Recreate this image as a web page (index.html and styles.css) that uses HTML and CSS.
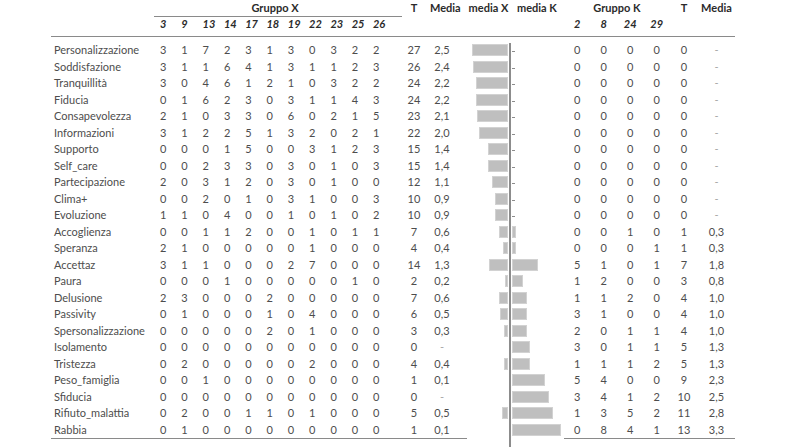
FILE: index.html
```html
<!DOCTYPE html>
<html lang="it">
<head>
<meta charset="utf-8">
<title>Gruppo X / Gruppo K</title>
<link rel="stylesheet" href="styles.css">
</head>
<body>
<div class="sheet">
  <div class="row h1"><span></span><span class="gx">Gruppo X</span><span>T</span><span>Media</span><span></span><span>media X</span><span>media K</span><span class="gk">Gruppo K</span><span>T</span><span>Media</span></div>
  <div class="row h2"><span></span><span>3</span><span>9</span><span>13</span><span>14</span><span>17</span><span>18</span><span>19</span><span>22</span><span>23</span><span>25</span><span>26</span><span></span><span></span><span></span><span></span><span></span><span></span><span>2</span><span>8</span><span>24</span><span>29</span><span></span><span></span></div>
  <div class="body">
    <div class="row"><span class="lbl">Personalizzazione</span><span>3</span><span>1</span><span>7</span><span>2</span><span>3</span><span>1</span><span>3</span><span>0</span><span>3</span><span>2</span><span>2</span><span></span><span>27</span><span>2,5</span><span></span><span class="bx"><i class="bar" style="width:36px"></i></span><span class="bk"><i class="tick"></i></span><span>0</span><span>0</span><span>0</span><span>0</span><span>0</span><span class="dash">-</span></div>
    <div class="row"><span class="lbl">Soddisfazione</span><span>3</span><span>1</span><span>1</span><span>6</span><span>4</span><span>1</span><span>3</span><span>1</span><span>1</span><span>2</span><span>3</span><span></span><span>26</span><span>2,4</span><span></span><span class="bx"><i class="bar" style="width:35px"></i></span><span class="bk"><i class="tick"></i></span><span>0</span><span>0</span><span>0</span><span>0</span><span>0</span><span class="dash">-</span></div>
    <div class="row"><span class="lbl">Tranquillità</span><span>3</span><span>0</span><span>4</span><span>6</span><span>1</span><span>2</span><span>1</span><span>0</span><span>3</span><span>2</span><span>2</span><span></span><span>24</span><span>2,2</span><span></span><span class="bx"><i class="bar" style="width:32px"></i></span><span class="bk"><i class="tick"></i></span><span>0</span><span>0</span><span>0</span><span>0</span><span>0</span><span class="dash">-</span></div>
    <div class="row"><span class="lbl">Fiducia</span><span>0</span><span>1</span><span>6</span><span>2</span><span>3</span><span>0</span><span>3</span><span>1</span><span>1</span><span>4</span><span>3</span><span></span><span>24</span><span>2,2</span><span></span><span class="bx"><i class="bar" style="width:32px"></i></span><span class="bk"><i class="tick"></i></span><span>0</span><span>0</span><span>0</span><span>0</span><span>0</span><span class="dash">-</span></div>
    <div class="row"><span class="lbl">Consapevolezza</span><span>2</span><span>1</span><span>0</span><span>3</span><span>3</span><span>0</span><span>6</span><span>0</span><span>2</span><span>1</span><span>5</span><span></span><span>23</span><span>2,1</span><span></span><span class="bx"><i class="bar" style="width:31px"></i></span><span class="bk"><i class="tick"></i></span><span>0</span><span>0</span><span>0</span><span>0</span><span>0</span><span class="dash">-</span></div>
    <div class="row"><span class="lbl">Informazioni</span><span>3</span><span>1</span><span>2</span><span>2</span><span>5</span><span>1</span><span>3</span><span>2</span><span>0</span><span>2</span><span>1</span><span></span><span>22</span><span>2,0</span><span></span><span class="bx"><i class="bar" style="width:29px"></i></span><span class="bk"><i class="tick"></i></span><span>0</span><span>0</span><span>0</span><span>0</span><span>0</span><span class="dash">-</span></div>
    <div class="row"><span class="lbl">Supporto</span><span>0</span><span>0</span><span>0</span><span>1</span><span>5</span><span>0</span><span>0</span><span>3</span><span>1</span><span>2</span><span>3</span><span></span><span>15</span><span>1,4</span><span></span><span class="bx"><i class="bar" style="width:20px"></i></span><span class="bk"><i class="tick"></i></span><span>0</span><span>0</span><span>0</span><span>0</span><span>0</span><span class="dash">-</span></div>
    <div class="row"><span class="lbl">Self_care</span><span>0</span><span>0</span><span>2</span><span>3</span><span>3</span><span>0</span><span>3</span><span>0</span><span>1</span><span>0</span><span>3</span><span></span><span>15</span><span>1,4</span><span></span><span class="bx"><i class="bar" style="width:20px"></i></span><span class="bk"><i class="tick"></i></span><span>0</span><span>0</span><span>0</span><span>0</span><span>0</span><span class="dash">-</span></div>
    <div class="row"><span class="lbl">Partecipazione</span><span>2</span><span>0</span><span>3</span><span>1</span><span>2</span><span>0</span><span>3</span><span>0</span><span>1</span><span>0</span><span>0</span><span></span><span>12</span><span>1,1</span><span></span><span class="bx"><i class="bar" style="width:16px"></i></span><span class="bk"><i class="tick"></i></span><span>0</span><span>0</span><span>0</span><span>0</span><span>0</span><span class="dash">-</span></div>
    <div class="row"><span class="lbl">Clima+</span><span>0</span><span>0</span><span>2</span><span>0</span><span>1</span><span>0</span><span>3</span><span>1</span><span>0</span><span>0</span><span>3</span><span></span><span>10</span><span>0,9</span><span></span><span class="bx"><i class="bar" style="width:13px"></i></span><span class="bk"><i class="tick"></i></span><span>0</span><span>0</span><span>0</span><span>0</span><span>0</span><span class="dash">-</span></div>
    <div class="row"><span class="lbl">Evoluzione</span><span>1</span><span>1</span><span>0</span><span>4</span><span>0</span><span>0</span><span>1</span><span>0</span><span>1</span><span>0</span><span>2</span><span></span><span>10</span><span>0,9</span><span></span><span class="bx"><i class="bar" style="width:13px"></i></span><span class="bk"><i class="tick"></i></span><span>0</span><span>0</span><span>0</span><span>0</span><span>0</span><span class="dash">-</span></div>
    <div class="row"><span class="lbl">Accoglienza</span><span>0</span><span>0</span><span>1</span><span>1</span><span>2</span><span>0</span><span>0</span><span>1</span><span>0</span><span>1</span><span>1</span><span></span><span>7</span><span>0,6</span><span></span><span class="bx"><i class="bar" style="width:9px"></i></span><span class="bk"><i class="bar" style="width:4px"></i></span><span>0</span><span>0</span><span>1</span><span>0</span><span>1</span><span>0,3</span></div>
    <div class="row"><span class="lbl">Speranza</span><span>2</span><span>1</span><span>0</span><span>0</span><span>0</span><span>0</span><span>0</span><span>1</span><span>0</span><span>0</span><span>0</span><span></span><span>4</span><span>0,4</span><span></span><span class="bx"><i class="bar" style="width:5px"></i></span><span class="bk"><i class="bar" style="width:4px"></i></span><span>0</span><span>0</span><span>0</span><span>1</span><span>1</span><span>0,3</span></div>
    <div class="row"><span class="lbl">Accettaz</span><span>3</span><span>1</span><span>1</span><span>0</span><span>0</span><span>0</span><span>2</span><span>7</span><span>0</span><span>0</span><span>0</span><span></span><span>14</span><span>1,3</span><span></span><span class="bx"><i class="bar" style="width:19px"></i></span><span class="bk"><i class="bar" style="width:26px"></i></span><span>5</span><span>1</span><span>0</span><span>1</span><span>7</span><span>1,8</span></div>
    <div class="row"><span class="lbl">Paura</span><span>0</span><span>0</span><span>0</span><span>1</span><span>0</span><span>0</span><span>0</span><span>0</span><span>0</span><span>1</span><span>0</span><span></span><span>2</span><span>0,2</span><span></span><span class="bx"><i class="bar" style="width:3px"></i></span><span class="bk"><i class="bar" style="width:11px"></i></span><span>1</span><span>2</span><span>0</span><span>0</span><span>3</span><span>0,8</span></div>
    <div class="row"><span class="lbl">Delusione</span><span>2</span><span>3</span><span>0</span><span>0</span><span>0</span><span>2</span><span>0</span><span>0</span><span>0</span><span>0</span><span>0</span><span></span><span>7</span><span>0,6</span><span></span><span class="bx"><i class="bar" style="width:9px"></i></span><span class="bk"><i class="bar" style="width:15px"></i></span><span>1</span><span>1</span><span>2</span><span>0</span><span>4</span><span>1,0</span></div>
    <div class="row"><span class="lbl">Passivity</span><span>0</span><span>1</span><span>0</span><span>0</span><span>0</span><span>1</span><span>0</span><span>4</span><span>0</span><span>0</span><span>0</span><span></span><span>6</span><span>0,5</span><span></span><span class="bx"><i class="bar" style="width:8px"></i></span><span class="bk"><i class="bar" style="width:15px"></i></span><span>3</span><span>1</span><span>0</span><span>0</span><span>4</span><span>1,0</span></div>
    <div class="row"><span class="lbl">Spersonalizzazione</span><span>0</span><span>0</span><span>0</span><span>0</span><span>0</span><span>2</span><span>0</span><span>1</span><span>0</span><span>0</span><span>0</span><span></span><span>3</span><span>0,3</span><span></span><span class="bx"><i class="bar" style="width:4px"></i></span><span class="bk"><i class="bar" style="width:15px"></i></span><span>2</span><span>0</span><span>1</span><span>1</span><span>4</span><span>1,0</span></div>
    <div class="row"><span class="lbl">Isolamento</span><span>0</span><span>0</span><span>0</span><span>0</span><span>0</span><span>0</span><span>0</span><span>0</span><span>0</span><span>0</span><span>0</span><span></span><span>0</span><span class="dash">-</span><span></span><span class="bx"></span><span class="bk"><i class="bar" style="width:18px"></i></span><span>3</span><span>0</span><span>1</span><span>1</span><span>5</span><span>1,3</span></div>
    <div class="row"><span class="lbl">Tristezza</span><span>0</span><span>2</span><span>0</span><span>0</span><span>0</span><span>0</span><span>0</span><span>2</span><span>0</span><span>0</span><span>0</span><span></span><span>4</span><span>0,4</span><span></span><span class="bx"><i class="bar" style="width:4px"></i></span><span class="bk"><i class="bar" style="width:18px"></i></span><span>1</span><span>1</span><span>1</span><span>2</span><span>5</span><span>1,3</span></div>
    <div class="row"><span class="lbl">Peso_famiglia</span><span>0</span><span>0</span><span>1</span><span>0</span><span>0</span><span>0</span><span>0</span><span>0</span><span>0</span><span>0</span><span>0</span><span></span><span>1</span><span>0,1</span><span></span><span class="bx"></span><span class="bk"><i class="bar" style="width:33px"></i></span><span>5</span><span>4</span><span>0</span><span>0</span><span>9</span><span>2,3</span></div>
    <div class="row"><span class="lbl">Sfiducia</span><span>0</span><span>0</span><span>0</span><span>0</span><span>0</span><span>0</span><span>0</span><span>0</span><span>0</span><span>0</span><span>0</span><span></span><span>0</span><span class="dash">-</span><span></span><span class="bx"></span><span class="bk"><i class="bar" style="width:37px"></i></span><span>3</span><span>4</span><span>1</span><span>2</span><span>10</span><span>2,5</span></div>
    <div class="row"><span class="lbl">Rifiuto_malattia</span><span>0</span><span>2</span><span>0</span><span>0</span><span>1</span><span>1</span><span>0</span><span>1</span><span>0</span><span>0</span><span>0</span><span></span><span>5</span><span>0,5</span><span></span><span class="bx"><i class="bar" style="width:6px"></i></span><span class="bk"><i class="bar" style="width:41px"></i></span><span>1</span><span>3</span><span>5</span><span>2</span><span>11</span><span>2,8</span></div>
    <div class="row last"><span class="lbl">Rabbia</span><span>0</span><span>1</span><span>0</span><span>0</span><span>0</span><span>0</span><span>0</span><span>0</span><span>0</span><span>0</span><span>0</span><span></span><span>1</span><span>0,1</span><span></span><span class="bx"></span><span class="bk"><i class="bar" style="width:49px"></i></span><span>0</span><span>8</span><span>4</span><span>1</span><span>13</span><span>3,3</span></div>
  </div>
  <div class="axis"></div>
</div>
</body>
</html>
```

FILE: styles.css
```css
html, body {
  margin: 0;
  padding: 0;
  background: #ffffff;
}

body {
  font-family: Lato, "Liberation Sans", sans-serif;
  font-size: 11px;
  color: #4d4d4d;
}

.sheet {
  position: relative;
  margin-left: 51px;
  width: 684px;
  height: 447px;
  overflow: hidden;
}

.row {
  display: grid;
  grid-template-columns: 105px repeat(11, 21.3px) 7.7px 32px 24px 13px 43px 54px repeat(4, 26.5px) 28px 37px;
  height: 16.5px;
  line-height: 16.5px;
  text-align: center;
  white-space: nowrap;
}

.row > span {
  display: block;
  box-sizing: border-box;
  min-width: 0;
}

.row:not(.h1) > span:nth-child(n+2):nth-child(-n+12) {
  text-align: left;
  padding-left: 4px;
}

.lbl {
  text-align: left;
  padding-left: 3px;
}

.h1 {
  height: 17px;
  line-height: 16px;
  font-weight: bold;
  color: #2b2b2b;
}

.h1 > span {
  height: 17px;
}

.gx {
  grid-column: 2 / 14;
  margin-left: -2px;
  margin-right: -4px;
  padding-right: 6px;
  border-bottom: 1px solid #8a8a8a;
}

.gk {
  grid-column: span 4;
}

.h2 {
  height: 20px;
  line-height: 14px;
  font-weight: bold;
  font-style: italic;
  color: #2b2b2b;
}

.h2 > span {
  height: 20px;
  border-bottom: 1px solid #8a8a8a;
}

.body {
  padding-top: 5px;
}

.last > span {
  border-bottom: 1px solid #8a8a8a;
}

.last > span.bx,
.last > span.bk {
  border-bottom: none;
}

.dash {
  color: #a6a6a6;
}

.bx,
.bk {
  display: flex !important;
  align-items: center;
}

.bx {
  justify-content: flex-end;
  padding-right: 2px;
}

.bk {
  justify-content: flex-start;
  padding-left: 2px;
}

.bar {
  display: block;
  height: 12px;
  box-sizing: border-box;
  background: #bfbfbf;
  border: 1px solid #d2d2d2;
}

.tick {
  display: block;
  width: 3px;
  height: 1px;
  margin-top: 3px;
  background: #8c8c8c;
}

.axis {
  position: absolute;
  left: 458px;
  top: 43px;
  width: 2px;
  height: 404px;
  background: #8c8c8c;
}
```
